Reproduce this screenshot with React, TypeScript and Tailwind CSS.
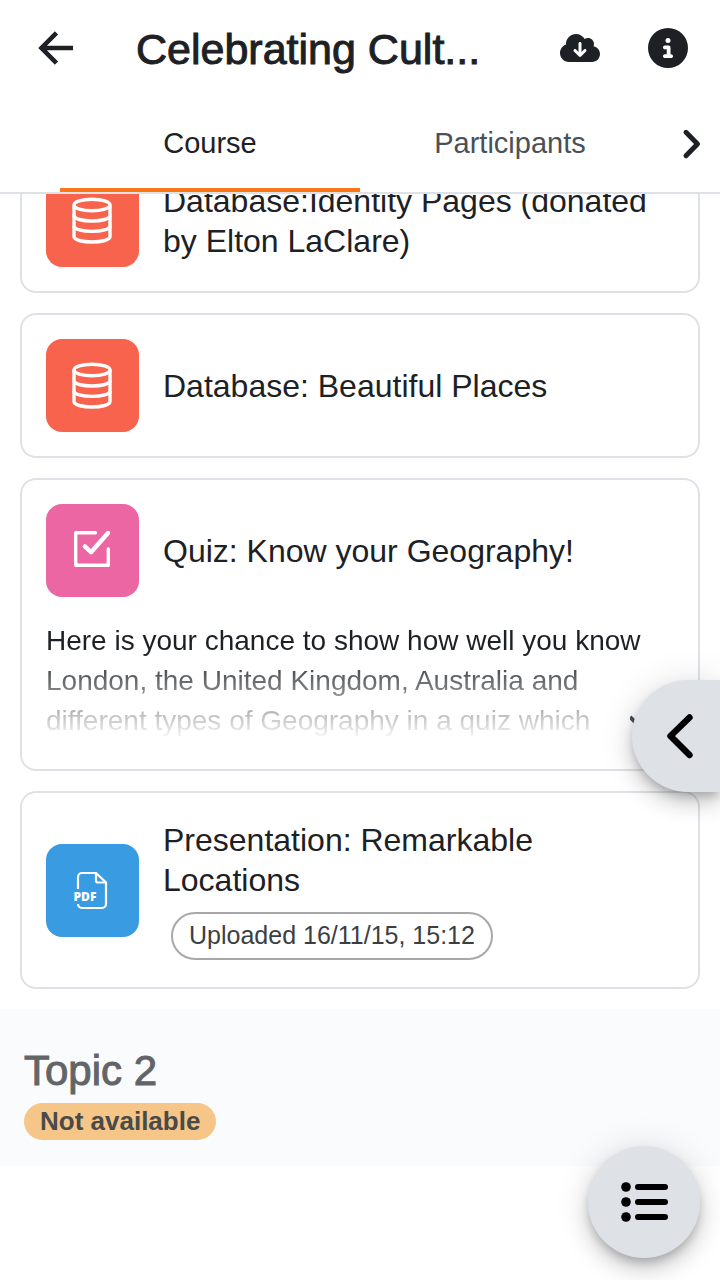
import type { ReactNode } from 'react';
import { FaCircleInfo, FaCloudArrowDown } from 'react-icons/fa6';

interface ActivityProps {
  title: string;
  icon: ReactNode;
  color: string;
  badge?: string;
  description?: string;
}

function DatabaseIcon() {
  return (
    <svg viewBox="0 0 93 93" fill="none" stroke="white" strokeWidth="3.4" className="size-full" aria-hidden="true">
      <ellipse cx="46" cy="31" rx="18" ry="5.7" />
      <path d="M28 31v31.6c0 3.2 8 5.4 18 5.4s18-2.2 18-5.4V31" />
      <path d="M28 41.6c0 3.2 8 5.4 18 5.4s18-2.2 18-5.4" />
      <path d="M28 52c0 3.2 8 5.4 18 5.4s18-2.2 18-5.4" />
    </svg>
  );
}

function QuizIcon() {
  return (
    <svg viewBox="0 0 93 93" fill="none" stroke="white" strokeLinecap="round" strokeLinejoin="round" className="size-full" aria-hidden="true">
      <path d="M49.5 28.7H29.7V61.3H62.3V45" strokeWidth="3.4" />
      <path d="M38.9 42.4L45 48.2L62 29" strokeWidth="4.4" />
    </svg>
  );
}

function PdfIcon() {
  return (
    <svg viewBox="0 0 93 93" fill="none" stroke="white" strokeWidth="2.2" className="size-full" aria-hidden="true">
      <path d="M32 45V33a4 4 0 0 1 4-4H50L60 38.5V60a4 4 0 0 1-4 4H36a4 4 0 0 1-4-4" />
      <path d="M50 29V36.500a2 2 0 0 0 2 2H60" />
      <text x="27.5" y="56.5" fill="white" stroke="none" fontFamily="'Open Sans', sans-serif" fontWeight="800" fontSize="12">
        PDF
      </text>
    </svg>
  );
}

function ActivityCard({ title, icon, color, badge, description }: ActivityProps) {
  return (
    <article className="relative rounded-2xl border-2 border-[#dee2e6] p-6">
      <div className="flex items-center gap-6">
        <div className={`size-[93px] shrink-0 rounded-2xl ${color}`}>{icon}</div>
        <div className="min-w-0 py-[3px]">
          <h3 className="text-[32px] leading-10">
            <a href="#activity">{title}</a>
          </h3>
          {badge && (
            <span className="mt-3 ml-2 flex h-12 w-fit items-center rounded-full border-2 border-[#a8a8a8] px-4 text-[25px] text-[#3b3f43]">
              {badge}
            </span>
          )}
        </div>
      </div>
      {description && (
        <>
          <p className="mt-6 mb-1 mask-[linear-gradient(to_bottom,black_30px,transparent_120px)] pr-5 text-[28px] leading-10">
            {description}
          </p>
          <svg viewBox="0 0 24 24" className="absolute right-11 bottom-8 size-6" fill="none" stroke="#495057" strokeWidth="4" aria-hidden="true">
            <path d="M0 4L12 16L24 4" />
          </svg>
        </>
      )}
    </article>
  );
}

const activities: ActivityProps[] = [
  {
    title: 'Database:Identity Pages (donated by Elton LaClare)',
    icon: <DatabaseIcon />,
    color: 'bg-[#f7634d]',
  },
  {
    title: 'Database: Beautiful Places',
    icon: <DatabaseIcon />,
    color: 'bg-[#f7634d]',
  },
  {
    title: 'Quiz: Know your Geography!',
    icon: <QuizIcon />,
    color: 'bg-[#eb66a2]',
    description:
      'Here is your chance to show how well you know London, the United Kingdom, Australia and different types of Geography in a quiz which',
  },
  {
    title: 'Presentation: Remarkable Locations',
    icon: <PdfIcon />,
    color: 'bg-[#399be2]',
    badge: 'Uploaded 16/11/15, 15:12',
  },
];

const fabShadow = 'shadow-[0_6px_10px_-2px_rgba(0,0,0,0.2),0_12px_20px_rgba(0,0,0,0.14),0_2px_36px_rgba(0,0,0,0.12)]';

export default function App() {
  return (
    <div className="relative flex h-screen flex-col overflow-hidden bg-white font-['Liberation_Sans',Arial,sans-serif] text-[#1d2125]">
      <header className="z-10 border-b-2 border-[#dee2e6] bg-white">
        <div className="flex h-24 items-center pr-8 pl-9">
          <button type="button" aria-label="Back" className="shrink-0">
            <svg viewBox="0 0 40 40" className="size-10" fill="none" stroke="currentColor" strokeWidth="4.6">
              <path d="M5 20H37M20.5 4.8L5.5 20L20.5 35.2" />
            </svg>
          </button>
          <h1 className="ml-[60px] min-w-0 flex-1 truncate pt-0.5 text-[43px] leading-[52px] [-webkit-text-stroke:1px_currentColor]">
            Celebrating Cult...
          </h1>
          <button type="button" aria-label="Download course" className="ml-12 shrink-0">
            <FaCloudArrowDown className="size-10" />
          </button>
          <button type="button" aria-label="Course summary" className="ml-12 shrink-0">
            <FaCircleInfo className="size-10" />
          </button>
        </div>
        <nav className="flex h-24 pl-[60px] text-[29px]">
          <button type="button" className="flex-1 border-b-4 border-[#ff7518] pt-1">
            Course
          </button>
          <button type="button" className="flex-1 border-b-4 border-transparent pt-1 text-[#495057]">
            Participants
          </button>
          <button type="button" aria-label="Next tab" className="flex w-[60px] items-center justify-center">
            <svg viewBox="0 0 32 32" className="size-8" fill="none" stroke="currentColor" strokeWidth="5" strokeLinecap="round" strokeLinejoin="round">
              <path d="M12 4.300L23.500 16L12 27.700" />
            </svg>
          </button>
        </nav>
      </header>

      <main className="min-h-0 flex-1">
        <section className="-mt-[46px] flex flex-col gap-5 px-5 pb-5">
          {activities.map((activity) => (
            <ActivityCard key={activity.title} {...activity} />
          ))}
        </section>
        <section className="bg-[#fafbfd] px-6 pt-[38px] pb-[26px]">
          <h2 className="text-[42px] leading-12 text-[#626568] [-webkit-text-stroke:1px_currentColor]">Topic 2</h2>
          <span className="mt-2 flex h-[37px] w-fit items-center rounded-full bg-[#f5c687] px-4 text-[26px] font-bold text-[#4a4a4a]">
            Not available
          </span>
        </section>
      </main>

      <button
        type="button"
        aria-label="Open blocks"
        className={`absolute top-[680px] right-0 z-20 flex h-28 w-22 items-center justify-center rounded-l-full bg-[#dee2e6] pl-2 text-black ${fabShadow}`}
      >
        <svg viewBox="0 0 48 48" className="size-12" fill="none" stroke="currentColor" strokeWidth="6.4" strokeLinecap="round" strokeLinejoin="round">
          <path d="M33.5 5.5L14.5 24L33.5 43" />
        </svg>
      </button>
      <button
        type="button"
        aria-label="Course index"
        className={`absolute right-5 bottom-[22px] z-20 flex size-28 items-center justify-center rounded-full bg-[#dee2e6] text-black ${fabShadow}`}
      >
        <svg viewBox="0 0 48 48" className="size-12" fill="currentColor" stroke="currentColor" strokeLinecap="round">
          <path d="M18 9H45M18 24H45M18 39H45" strokeWidth="6" />
          <g stroke="none">
            <circle cx="6" cy="9" r="4.8" />
            <circle cx="6" cy="24" r="4.8" />
            <circle cx="6" cy="39" r="4.8" />
          </g>
        </svg>
      </button>
    </div>
  );
}
